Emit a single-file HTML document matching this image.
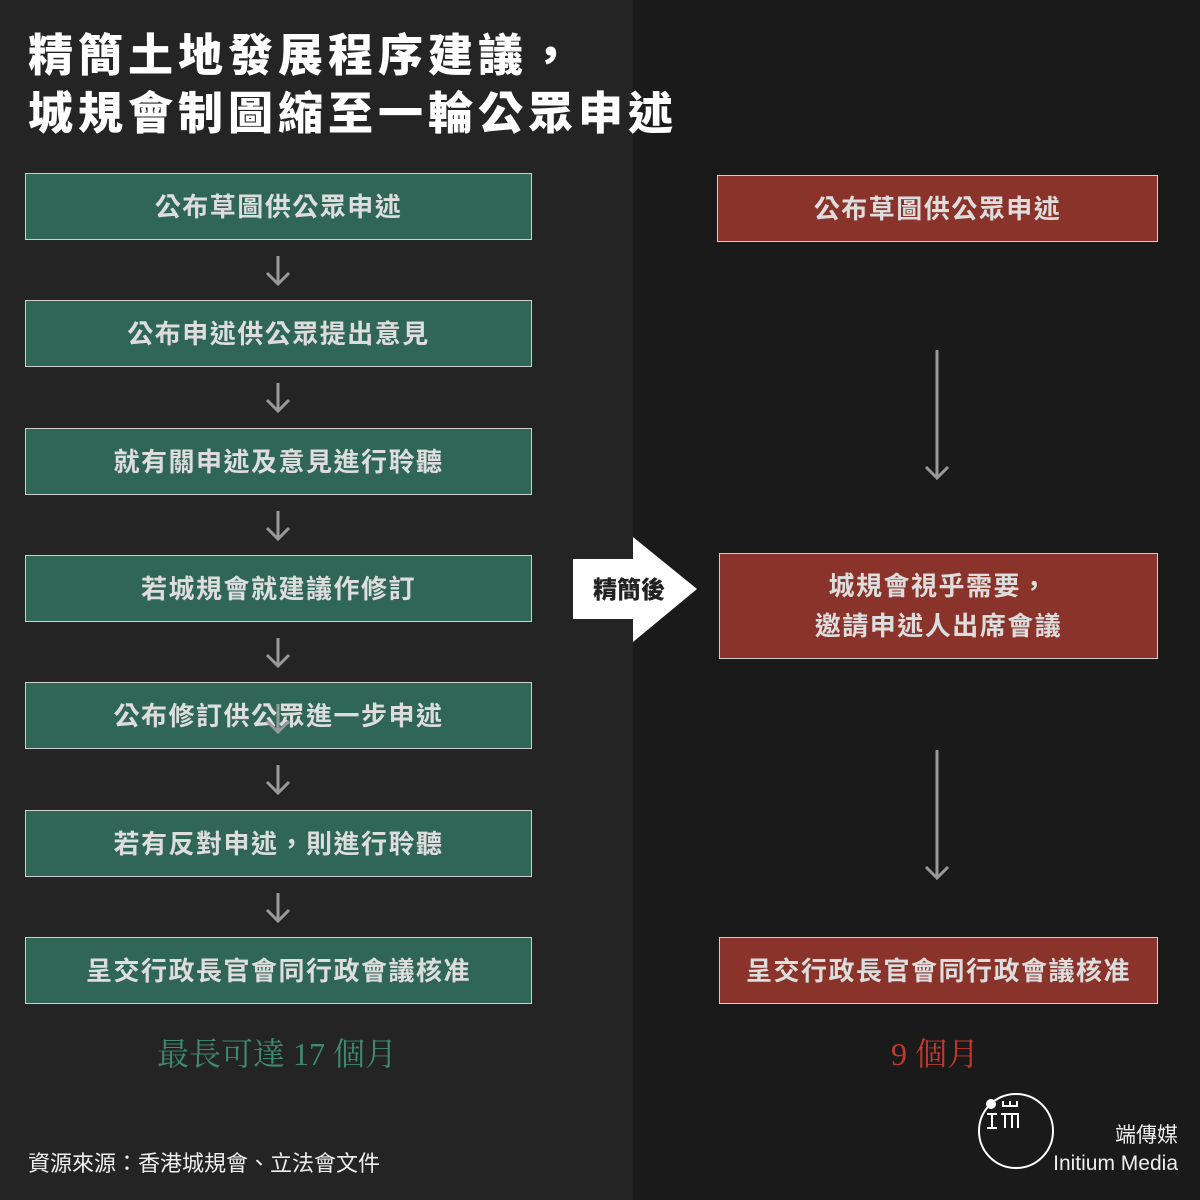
<!DOCTYPE html>
<html><head><meta charset="utf-8"><style>
*{margin:0;padding:0;box-sizing:border-box}
body{width:1200px;height:1200px;position:relative;background:#1a1a1a;font-family:"Liberation Sans","Noto Sans CJK TC",sans-serif;overflow:hidden}
.l{position:absolute;left:0;top:0;width:633px;height:1200px;background:#242424}
.t{position:absolute;left:28px;color:#fff;font-weight:900;font-size:45px;letter-spacing:5px;white-space:nowrap;line-height:1}
.b{position:absolute;display:flex;align-items:center;justify-content:center;text-align:center;color:#ddd;font-weight:700;font-size:26px;letter-spacing:1.5px;line-height:40px;border:1px solid #cfcfcf}
.g{background:#306655;left:25px;width:507px;height:67px}
.r{background:#8a332b}
.big{position:absolute;font-family:"Liberation Serif","Noto Serif CJK SC",serif;font-size:32px;white-space:nowrap}
</style></head><body>
<div class="l"></div>
<div class="t" style="top:33px">精簡土地發展程序建議，</div>
<div class="t" style="top:91px">城規會制圖縮至一輪公眾申述</div>

<div class="b g" style="top:173px">公布草圖供公眾申述</div>
<div class="b g" style="top:300px">公布申述供公眾提出意見</div>
<div class="b g" style="top:428px">就有關申述及意見進行聆聽</div>
<div class="b g" style="top:555px">若城規會就建議作修訂</div>
<div class="b g" style="top:682px">公布修訂供公眾進一步申述</div>
<div class="b g" style="top:810px">若有反對申述，則進行聆聽</div>
<div class="b g" style="top:937px">呈交行政長官會同行政會議核准</div>

<svg style="position:absolute;left:0;top:0" width="1200" height="1200">
<g stroke="#999" stroke-width="3" fill="none">
<path d="M278 256v28M267 273l11 11 11-11"/>
<path d="M278 383v28M267 400l11 11 11-11"/>
<path d="M278 511v28M267 528l11 11 11-11"/>
<path d="M278 638v28M267 655l11 11 11-11"/>
<path d="M278 704v28M267 721l11 11 11-11"/>
<path d="M278 765v28M267 782l11 11 11-11"/>
<path d="M278 893v28M267 910l11 11 11-11"/>
<path d="M937 350v128M926 467l11 11 11-11"/>
<path d="M937 750v128M926 867l11 11 11-11"/>
</g>
<path d="M573 559H633V537L697 589L633 642V619H573Z" fill="#fff"/>
<text x="629" y="598" text-anchor="middle" font-size="24" font-weight="900" fill="#222" font-family="Liberation Sans,Noto Sans CJK TC,sans-serif">精簡後</text>
<circle cx="1016" cy="1131" r="37" stroke="#fff" stroke-width="2" fill="none"/>
<circle cx="991" cy="1104" r="5" fill="#fff"/>
<g stroke="#fff" stroke-width="2" fill="none">
<path d="M987 1114h10M987 1128h10M992 1114v14"/>
<path d="M1003 1101v5h14v-5M1010 1101v5M1001 1114h18M1005 1114v14M1012 1114v14M1018 1114v14"/>
</g>
</svg>

<div class="b r" style="left:717px;top:175px;width:441px;height:67px">公布草圖供公眾申述</div>
<div class="b r" style="left:719px;top:553px;width:439px;height:106px">城規會視乎需要，<br>邀請申述人出席會議</div>
<div class="b r" style="left:719px;top:937px;width:439px;height:67px">呈交行政長官會同行政會議核准</div>

<div class="big" style="left:157px;top:1029px;color:#3d8a6f">最長可達 17 個月</div>
<div class="big" style="left:891px;top:1029px;color:#c0392b">9 個月</div>

<div style="position:absolute;left:28px;top:1146px;color:#eee;font-size:22px;white-space:nowrap">資源來源：香港城規會、立法會文件</div>
<div style="position:absolute;right:22px;top:1122px;color:#eee;font-size:21px;text-align:right;line-height:28px">端傳媒<br>Initium Media</div>
</body></html>
